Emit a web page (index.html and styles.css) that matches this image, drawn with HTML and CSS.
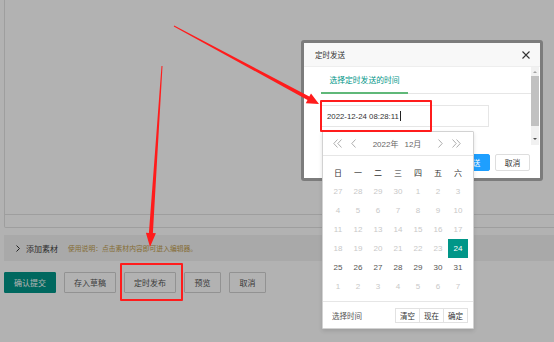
FILE: index.html
```html
<!DOCTYPE html>
<html>
	<head>
		<meta charset="utf-8">
		<link rel="stylesheet" href="styles.css">
	</head>
	<body>
		<div class="page">
			<div class="editor">
				<div class="editor-body"></div>
				<div class="editor-foot"></div>
			</div>
			<div class="material-bar">
				<svg class="chevron" width="4" height="7" viewBox="0 0 4 7"><polyline points="0.5,0.5 3.5,3.5 0.5,6.5" fill="none" stroke="#333" stroke-width="1"/></svg>
				<span class="material-title">添加素材</span>
				<span class="material-tip">使用说明：点击素材内容即可进入编辑器。</span>
			</div>
			<div class="actions">
				<a class="btn btn-primary btn-wide">确认提交</a>
				<a class="btn btn-wide">存入草稿</a>
				<a class="btn btn-wide">定时发布</a>
				<a class="btn">预览</a>
				<a class="btn">取消</a>
			</div>
		</div>

		<div class="shade"></div>

		<div class="layer">
			<div class="layer-title">
				定时发送
				<svg class="layer-close" width="8" height="8" viewBox="0 0 8 8"><path d="M0.5 0.5L7.5 7.5M7.5 0.5L0.5 7.5" stroke="#333" stroke-width="1.1"/></svg>
			</div>
			<div class="layer-content">
				<div class="layer-main">
					<div class="tab-title">
						<span class="tab-this">选择定时发送的时间</span>
					</div>
					<div class="date-input">2022-12-24 08:28:11<span class="caret"></span></div>
				</div>
				<div class="scrollbar">
					<div class="scroll-up"></div>
					<div class="scroll-thumb"></div>
					<div class="scroll-track"></div>
					<div class="scroll-down"></div>
				</div>
			</div>
			<div class="layer-btns">
				<a class="lbtn lbtn-send">发送</a>
				<a class="lbtn">取消</a>
			</div>
		</div>

		<div class="laydate">
			<div class="laydate-head">
				<svg class="nav prev-year" width="9" height="9" viewBox="0 0 9 9"><path d="M4.5 0.5L0.8 4.5L4.5 8.5M8.5 0.5L4.8 4.5L8.5 8.5" fill="none" stroke="#999" stroke-width="0.8"/></svg>
				<svg class="nav prev-month" width="5" height="9" viewBox="0 0 5 9"><path d="M4.5 0.5L0.8 4.5L4.5 8.5" fill="none" stroke="#999" stroke-width="0.8"/></svg>
				<span class="ym"><span>2022年</span><span>12月</span></span>
				<svg class="nav next-month" width="5" height="9" viewBox="0 0 5 9"><path d="M0.5 0.5L4.2 4.5L0.5 8.5" fill="none" stroke="#999" stroke-width="0.8"/></svg>
				<svg class="nav next-year" width="9" height="9" viewBox="0 0 9 9"><path d="M0.5 0.5L4.2 4.5L0.5 8.5M4.5 0.5L8.2 4.5L4.5 8.5" fill="none" stroke="#999" stroke-width="0.8"/></svg>
			</div>
			<div class="laydate-grid" id="grid"></div>
			<div class="laydate-foot">
				<span class="foot-label">选择时间</span>
				<span class="foot-btns">
					<a class="fbtn">清空</a><a class="fbtn">现在</a><a class="fbtn">确定</a>
				</span>
			</div>
		</div>

		<svg class="marks" width="554" height="342" viewBox="0 0 554 342">
			<polygon fill="#ff1c1c" points="173.8,26.4 174.2,25.6 309.3,96.5 311,93.5 319,104 305.8,103.2 307.5,100.1"/>
			<polygon fill="#ff1c1c" points="162.5,66 161.5,66 148.9,232.9 145.9,232.7 150,247 155.9,233.3 152.9,233.1"/>
		</svg>
		<div class="mark mark-input"></div>
		<div class="mark mark-publish"></div>

		<script>
			var week = ['日', '一', '二', '三', '四', '五', '六'];
			var days = [27, 28, 29, 30, 1, 2, 3];
			for (var d = 4; d <= 31; d++) {
				days.push(d);
			}
			for (var d = 1; d <= 7; d++) {
				days.push(d);
			}
			var html = '';
			for (var i = 0; i < week.length; i++) {
				html += '<span class="cell week">' + week[i] + '</span>';
			}
			for (var i = 0; i < days.length; i++) {
				var cls = 'cell off';
				if (i >= 4 && i < 35) {
					if (days[i] == 24) {
						cls = 'cell on';
					} else if (days[i] > 24) {
						cls = 'cell';
					}
				}
				html += '<span class="' + cls + '">' + days[i] + '</span>';
			}
			document.getElementById('grid').innerHTML = html;
		</script>
	</body>
</html>
```

FILE: styles.css
```css
body {
	margin: 0;
	width: 554px;
	height: 342px;
	overflow: hidden;
	position: relative;
	background: #fff;
	font-family: "Liberation Sans", "Noto Sans CJK SC", sans-serif;
	font-size: 8px;
	color: #333;
}
a {
	text-decoration: none;
}

.page {
	padding-left: 4px;
}
.editor {
	margin-right: -10px;
	border: 1px solid #e2e2e2;
	border-top: none;
	border-radius: 0 0 2px 2px;
}
.editor-body {
	height: 214px;
	border-bottom: 1px solid #e2e2e2;
}
.editor-foot {
	height: 12px;
}
.material-bar {
	margin-top: 7px;
	height: 26px;
	background: #f2f2f2;
	display: flex;
	align-items: center;
	padding-left: 12px;
}
.chevron {
	margin-right: 6px;
}
.material-title {
	font-size: 8px;
	color: #444;
	margin-right: 10px;
}
.material-tip {
	font-size: 6.8px;
	color: #bf9c4c;
}
.actions {
	margin-top: 11px;
	display: flex;
	gap: 8px;
}
.btn {
	box-sizing: border-box;
	height: 21px;
	width: 37px;
	border: 1px solid #d2d2d2;
	background: #fff;
	color: #555;
	display: flex;
	align-items: center;
	justify-content: center;
	border-radius: 1px;
}
.btn-wide {
	width: 52px;
}
.btn-primary {
	background: #009688;
	border-color: #009688;
	color: #fff;
}

.shade {
	position: absolute;
	inset: 0;
	background: rgba(0, 0, 0, 0.3);
}

.layer {
	position: absolute;
	left: 301px;
	top: 40px;
	width: 236px;
	height: 135px;
	border: 3px solid rgba(0, 0, 0, 0.3);
	border-radius: 3px;
	background: #fff;
	background-clip: padding-box;
	display: flex;
	flex-direction: column;
}
.layer-title {
	height: 23px;
	padding-left: 11px;
	background: #f8f8f8;
	border-bottom: 1px solid #eee;
	display: flex;
	align-items: center;
	justify-content: space-between;
	padding-right: 10px;
	font-size: 7.5px;
}
.layer-content {
	height: 78px;
	display: flex;
	padding-right: 1px;
}
.layer-main {
	flex: 1;
	padding-left: 17px;
	overflow: hidden;
}
.tab-title {
	height: 26px;
	border-bottom: 1px solid #e6e6e6;
	display: flex;
	align-items: flex-end;
}
.tab-this {
	box-sizing: border-box;
	width: 87px;
	height: 22px;
	text-align: center;
	color: #009688;
	border-bottom: 2px solid #5fb878;
	margin-bottom: -1px;
	font-size: 7.8px;
	line-height: 18px;
}
.date-input {
	box-sizing: border-box;
	margin-top: 11px;
	width: 168px;
	height: 22px;
	border: 1px solid #e6e6e6;
	padding: 0 5px;
	font-size: 7.8px;
	color: #333;
	display: flex;
	align-items: center;
}
.caret {
	width: 1px;
	height: 10px;
	background: #222;
	margin-left: 1px;
}
.scrollbar {
	width: 8px;
	background: #f1f1f1;
	display: flex;
	flex-direction: column;
	align-items: center;
}
.scroll-up, .scroll-down {
	width: 0;
	height: 0;
	border-left: 2px solid transparent;
	border-right: 2px solid transparent;
	margin: 4px 0 3px;
}
.scroll-up {
	border-bottom: 2px solid #a3a3a3;
}
.scroll-down {
	border-top: 2px solid #505050;
	margin: 3px 0 5px;
}
.scroll-thumb {
	width: 8px;
	height: 50px;
	background: #c1c1c1;
}
.scroll-track {
	flex: 1;
}
.layer-btns {
	display: flex;
	justify-content: flex-end;
	gap: 5px;
	padding: 9px 10px 0 0;
}
.lbtn {
	box-sizing: border-box;
	height: 17px;
	width: 35px;
	border: 1px solid #dedede;
	border-radius: 2px;
	background: #fff;
	color: #333;
	display: flex;
	align-items: center;
	justify-content: center;
	font-size: 7.8px;
}
.lbtn-send {
	background: #1e9fff;
	border-color: #1e9fff;
	color: #fff;
}

.laydate {
	position: absolute;
	left: 322px;
	top: 131px;
	box-sizing: border-box;
	width: 152px;
	height: 198px;
	background: #fff;
	border: 1px solid #d2d2d2;
	box-shadow: 0 2px 4px rgba(0, 0, 0, 0.12);
	border-radius: 1px;
}
.laydate-head {
	height: 23px;
	border-bottom: 1px solid #e6e6e6;
	display: flex;
	align-items: center;
	padding: 0 12px 0 10px;
}
.prev-month {
	margin-left: 9px;
}
.next-month {
	margin-right: 9px;
}
.ym {
	flex: 1;
	display: flex;
	justify-content: center;
	gap: 6px;
	color: #666;
	font-size: 8px;
}
.laydate-grid {
	display: grid;
	grid-template-columns: repeat(7, 20px);
	grid-auto-rows: 19px;
	padding: 7px 5px 5px 5px;
}
.cell {
	display: flex;
	align-items: center;
	justify-content: center;
	color: #555;
	font-size: 8px;
}
.cell.week {
	color: #333;
}
.cell.off {
	color: #c8c8c8;
}
.cell.on {
	background: #009688;
	color: #fff;
}
.laydate-foot {
	border-top: 1px solid #e6e6e6;
	height: 26px;
	display: flex;
	align-items: center;
	justify-content: space-between;
	padding: 0 5px 0 9px;
}
.foot-label {
	color: #555;
	font-size: 7.5px;
}
.foot-btns {
	display: flex;
}
.fbtn {
	box-sizing: border-box;
	width: 25px;
	height: 15px;
	border: 1px solid #e2e2e2;
	margin-left: -1px;
	display: flex;
	align-items: center;
	justify-content: center;
	color: #333;
	font-size: 7.5px;
}

.marks {
	position: absolute;
	left: 0;
	top: 0;
}
.mark {
	position: absolute;
	border: 2px solid #ff1c1c;
	border-radius: 1px;
}
.mark-input {
	left: 320px;
	top: 100px;
	width: 108px;
	height: 28px;
}
.mark-publish {
	left: 120px;
	top: 263px;
	width: 59px;
	height: 34px;
}
```
